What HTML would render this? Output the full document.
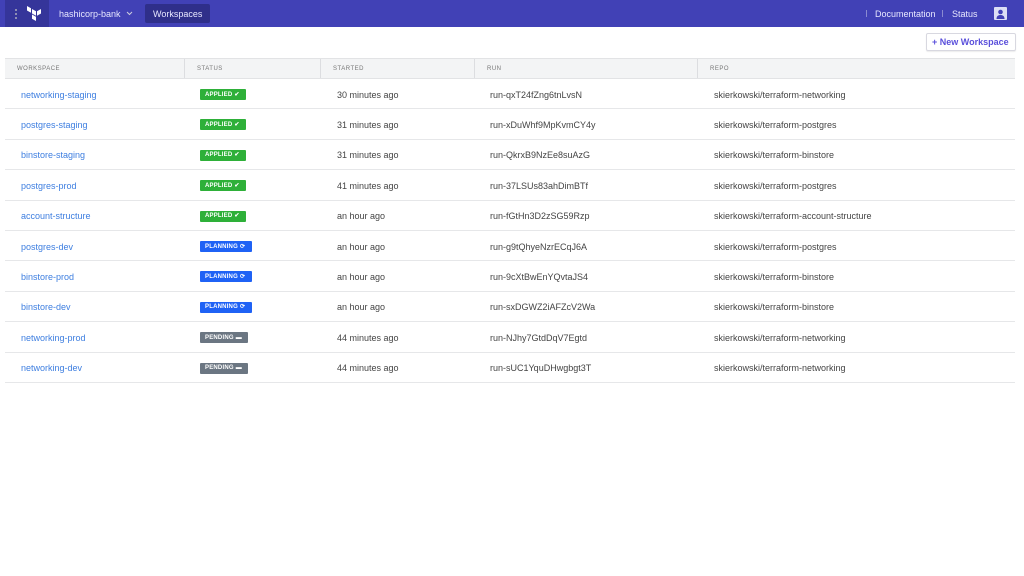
<!DOCTYPE html>
<html><head><style>
*{margin:0;padding:0;box-sizing:border-box}
body{width:1024px;height:576px;background:#fff;font-family:"Liberation Sans",sans-serif;position:relative;overflow:hidden;color:#333}
.nav{position:absolute;left:0;top:0;width:1024px;height:27px;background:#4141b6}
.lsq{position:absolute;left:5px;top:0;width:44px;height:27px;background:#35359a}
.nav span{position:absolute;color:#e8e8ff;font-size:9px;top:8.5px}
.tab{position:absolute;left:145px;top:4px;width:65px;height:19px;background:#2f2f8a;border-radius:2px}
.btn{position:absolute;left:926px;top:33px;width:90px;height:18px;border:1px solid #d8d8e0;border-radius:2px;color:#5a4fdb;font-size:9px;font-weight:bold;padding:3px 0 0 5px;box-shadow:0 1px 1px rgba(0,0,0,.08)}
.hdr{position:absolute;left:5px;top:58px;width:1010px;height:21px;background:#f3f4f5;border-top:1px solid #e2e3e5;border-bottom:1px solid #e2e3e5}
.hdr span{position:absolute;top:7px;font-size:6px;color:#777;letter-spacing:.5px}
.sep{position:absolute;top:0;width:1px;height:19px;background:#dcdde0}
.row{position:absolute;left:5px;width:1010px;height:30.4px;border-bottom:1px solid #e6e7e9}
.row span{position:absolute;top:10.5px;font-size:9px;color:#444}
.row .ws{left:16px;color:#3d7ee0}
.b{position:absolute;left:195px;top:10px;height:11px;border-radius:1px;color:#fff;font-size:6px;font-weight:bold;display:flex;align-items:center;padding-left:5px;letter-spacing:.2px;overflow:hidden}
.b i{font-style:normal;font-size:6px;line-height:6px;margin-left:2px}
.ap{background:#2eb039;width:46px}.pl{background:#1f62f5;width:52px}.pe{background:#6b7682;width:48px}
</style></head><body>
<div class="nav">
<div class="lsq"></div>
<svg style="position:absolute;left:14px;top:8px" width="4" height="12"><circle cx="2" cy="2" r="1" fill="#aab"/><circle cx="2" cy="6" r="1" fill="#aab"/><circle cx="2" cy="10" r="1" fill="#aab"/></svg>
<svg style="position:absolute;left:27px;top:6px" width="14" height="15"><path d="M0 0l4 2.3v4.5L0 4.5z M5 3l4 2.3v4.5L5 7.5z M10 5.3l4-2.3v4.5l-4 2.3z M5 8.5l4 2.3V15L5 12.8z" fill="#fff"/></svg>
<span style="left:59px">hashicorp-bank</span>
<svg style="position:absolute;left:126px;top:11px" width="7" height="5"><path d="M1 1l2.5 2.5L6 1" stroke="#ccd" fill="none"/></svg>
<div class="tab"></div><span style="left:153px">Workspaces</span>
<div style="position:absolute;left:866px;top:10px;width:1px;height:7px;background:#8a8ad0"></div>
<span style="left:875px">Documentation</span>
<div style="position:absolute;left:942px;top:10px;width:1px;height:7px;background:#8a8ad0"></div>
<span style="left:952px">Status</span>
<div style="position:absolute;left:994px;top:7px;width:13px;height:13px;background:#dcdff5;border-radius:1px"><svg width="13" height="13"><circle cx="6.5" cy="5" r="2.3" fill="#4141b6"/><path d="M2.5 12c0-3 1.8-4 4-4s4 1 4 4z" fill="#4141b6"/></svg></div>
</div>
<div class="btn">+ New Workspace</div>
<div class="hdr">
<span style="left:12px">WORKSPACE</span><div class="sep" style="left:179px"></div>
<span style="left:192px">STATUS</span><div class="sep" style="left:315px"></div>
<span style="left:328px">STARTED</span><div class="sep" style="left:469px"></div>
<span style="left:482px">RUN</span><div class="sep" style="left:692px"></div>
<span style="left:705px">REPO</span>
</div>
<div class="row" style="top:79px"><span class="ws">networking-staging</span><div class="b ap">APPLIED<i>✔</i></div><span style="left:332px">30 minutes ago</span><span style="left:485px">run-qxT24fZng6tnLvsN</span><span style="left:709px">skierkowski/terraform-networking</span></div>
<div class="row" style="top:109.4px"><span class="ws">postgres-staging</span><div class="b ap">APPLIED<i>✔</i></div><span style="left:332px">31 minutes ago</span><span style="left:485px">run-xDuWhf9MpKvmCY4y</span><span style="left:709px">skierkowski/terraform-postgres</span></div>
<div class="row" style="top:139.8px"><span class="ws">binstore-staging</span><div class="b ap">APPLIED<i>✔</i></div><span style="left:332px">31 minutes ago</span><span style="left:485px">run-QkrxB9NzEe8suAzG</span><span style="left:709px">skierkowski/terraform-binstore</span></div>
<div class="row" style="top:170.2px"><span class="ws">postgres-prod</span><div class="b ap">APPLIED<i>✔</i></div><span style="left:332px">41 minutes ago</span><span style="left:485px">run-37LSUs83ahDimBTf</span><span style="left:709px">skierkowski/terraform-postgres</span></div>
<div class="row" style="top:200.6px"><span class="ws">account-structure</span><div class="b ap">APPLIED<i>✔</i></div><span style="left:332px">an hour ago</span><span style="left:485px">run-fGtHn3D2zSG59Rzp</span><span style="left:709px">skierkowski/terraform-account-structure</span></div>
<div class="row" style="top:231px"><span class="ws">postgres-dev</span><div class="b pl">PLANNING<i>⟳</i></div><span style="left:332px">an hour ago</span><span style="left:485px">run-g9tQhyeNzrECqJ6A</span><span style="left:709px">skierkowski/terraform-postgres</span></div>
<div class="row" style="top:261.4px"><span class="ws">binstore-prod</span><div class="b pl">PLANNING<i>⟳</i></div><span style="left:332px">an hour ago</span><span style="left:485px">run-9cXtBwEnYQvtaJS4</span><span style="left:709px">skierkowski/terraform-binstore</span></div>
<div class="row" style="top:291.8px"><span class="ws">binstore-dev</span><div class="b pl">PLANNING<i>⟳</i></div><span style="left:332px">an hour ago</span><span style="left:485px">run-sxDGWZ2iAFZcV2Wa</span><span style="left:709px">skierkowski/terraform-binstore</span></div>
<div class="row" style="top:322.2px"><span class="ws">networking-prod</span><div class="b pe">PENDING<i>▬</i></div><span style="left:332px">44 minutes ago</span><span style="left:485px">run-NJhy7GtdDqV7Egtd</span><span style="left:709px">skierkowski/terraform-networking</span></div>
<div class="row" style="top:352.6px"><span class="ws">networking-dev</span><div class="b pe">PENDING<i>▬</i></div><span style="left:332px">44 minutes ago</span><span style="left:485px">run-sUC1YquDHwgbgt3T</span><span style="left:709px">skierkowski/terraform-networking</span></div>
</body></html>
